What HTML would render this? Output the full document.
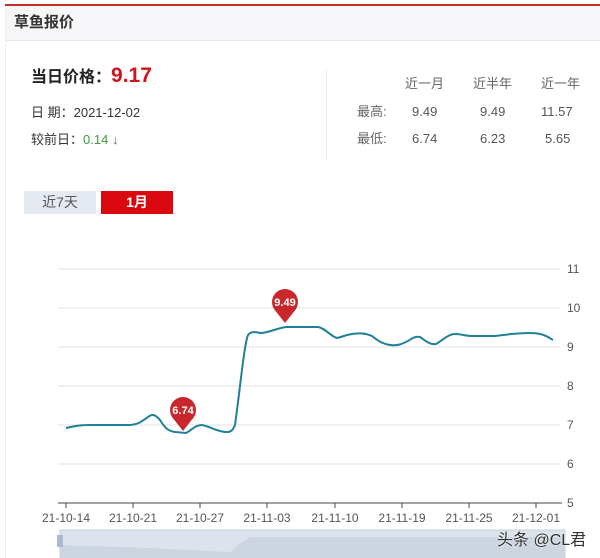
<!DOCTYPE html>
<html><head><meta charset="utf-8"><style>
body{margin:0;width:600px;height:558px;background:#fff;position:relative;overflow:hidden;font-family:"Liberation Sans","Noto Sans CJK SC",sans-serif;color:#333}
.a{position:absolute;white-space:nowrap;line-height:18px}
</style></head><body>
<div class="a" style="left:5px;top:4px;width:595px;height:2px;background:#c9302c"></div>
<div class="a" style="left:5px;top:6px;width:595px;height:34px;background:#f6f6f8;border-bottom:1px solid #e8e8ec"></div>
<div class="a" style="left:5px;top:6px;width:1px;height:552px;background:#eee"></div>
<div class="a" style="left:14px;top:14px;font-size:15px;font-weight:bold;color:#333">草鱼报价</div>
<div class="a" style="left:31px;top:65px;font-size:16px;font-weight:bold;color:#222;line-height:22px">当日价格：<span style="color:#d0131a;font-size:21px">9.17</span></div>
<div class="a" style="left:31px;top:104px;font-size:13px;color:#333">日 期：2021-12-02</div>
<div class="a" style="left:31px;top:131px;font-size:13px;color:#333">较前日：<span style="color:#3a9a3a">0.14</span> <span style="color:#666">↓</span></div>
<div class="a" style="left:326px;top:70px;width:1px;height:90px;background:#eee"></div>
<div class="a" style="left:405px;top:75px;font-size:13px;color:#666">近一月</div>
<div class="a" style="left:473px;top:75px;font-size:13px;color:#666">近半年</div>
<div class="a" style="left:541px;top:75px;font-size:13px;color:#666">近一年</div>
<div class="a" style="left:357px;top:103px;font-size:13px;color:#666">最高:</div>
<div class="a" style="left:357px;top:130px;font-size:13px;color:#666">最低:</div>
<div class="a" style="left:412px;top:103px;font-size:13px;color:#555">9.49</div>
<div class="a" style="left:480px;top:103px;font-size:13px;color:#555">9.49</div>
<div class="a" style="left:541px;top:103px;font-size:13px;color:#555">11.57</div>
<div class="a" style="left:412px;top:130px;font-size:13px;color:#555">6.74</div>
<div class="a" style="left:480px;top:130px;font-size:13px;color:#555">6.23</div>
<div class="a" style="left:545px;top:130px;font-size:13px;color:#555">5.65</div>
<div class="a" style="left:24px;top:191px;width:72px;height:23px;background:#e5eaf2;color:#555;font-size:14px;text-align:center;line-height:23px">近7天</div>
<div class="a" style="left:101px;top:191px;width:72px;height:23px;background:#d9090f;color:#fff;font-size:14px;font-weight:bold;text-align:center;line-height:23px">1月</div>
<svg class="a" style="left:0;top:0" width="600" height="558">
<g stroke="#e2e2e2" stroke-width="1">
<line x1="58" y1="269" x2="560" y2="269"/><line x1="58" y1="308" x2="560" y2="308"/><line x1="58" y1="347" x2="560" y2="347"/><line x1="58" y1="386" x2="560" y2="386"/><line x1="58" y1="425" x2="560" y2="425"/><line x1="58" y1="464" x2="560" y2="464"/>
</g>
<line x1="58" y1="503" x2="562" y2="503" stroke="#444"/>
<g stroke="#444"><line x1="66" y1="503" x2="66" y2="508"/><line x1="133" y1="503" x2="133" y2="508"/><line x1="200" y1="503" x2="200" y2="508"/><line x1="267" y1="503" x2="267" y2="508"/><line x1="335" y1="503" x2="335" y2="508"/><line x1="402" y1="503" x2="402" y2="508"/><line x1="469" y1="503" x2="469" y2="508"/><line x1="536" y1="503" x2="536" y2="508"/></g>
<g font-size="12" fill="#555" font-family="Liberation Sans,sans-serif">
<text x="567" y="273">11</text><text x="567" y="312">10</text><text x="567" y="351">9</text><text x="567" y="390">8</text><text x="567" y="429">7</text><text x="567" y="468">6</text><text x="567" y="507">5</text>
<g text-anchor="middle" font-size="12"><text x="66" y="522">21-10-14</text><text x="133" y="522">21-10-21</text><text x="200" y="522">21-10-27</text><text x="267" y="522">21-11-03</text><text x="335" y="522">21-11-10</text><text x="402" y="522">21-11-19</text><text x="469" y="522">21-11-25</text><text x="536" y="522">21-12-01</text></g>
</g>
<path d="M66,428 C75,426 80,425 90,425 L130,425 C140,424 142,421 148,417 C152,414 155,414 160,420 C165,428 168,431 175,432 L186,433 C192,430 195,425 202,425 C208,426 212,429 220,431 C228,433 232,433 235,425 C240,390 244,345 248,335 C252,330 258,333 262,333 C270,332 278,328 286,327 L318,327 C325,328 330,336 337,338 C342,337 345,335 352,334 C360,333 365,333 372,336 C378,341 383,344 390,345 C398,346 402,344 408,341 C412,338 416,336 420,337 C426,341 430,345 436,344 C442,341 448,334 455,334 C462,334 465,336 472,336 L495,336 C510,334 520,333 530,333 C538,333 543,334 548,337 L553,340" fill="none" stroke="#1f8096" stroke-width="2"/>
<g fill="#c8282b"><circle cx="285" cy="302" r="13"/><path d="M274,309 L285,323 L296,309Z"/><circle cx="183" cy="410" r="13"/><path d="M172,417 L183,431 L194,417Z"/></g>
<g fill="#fff" font-size="11" font-weight="bold" text-anchor="middle" font-family="Liberation Sans,sans-serif"><text x="285" y="306">9.49</text><text x="183" y="414">6.74</text></g>
<rect x="60" y="530" width="505" height="28" fill="#dde3ec" stroke="#c5cfdc"/>
<path d="M60,545 L150,548 L230,552 L238,545 L250,537 L565,537 L565,558 L60,558Z" fill="#cdd5e1"/>
<rect x="57" y="535" width="6" height="12" fill="#a9bad0"/>
</svg>
<div class="a" style="left:497px;top:532px;font-size:16px;color:#333;text-shadow:0 0 2px #fff">头条 @CL君</div>
</body></html>
